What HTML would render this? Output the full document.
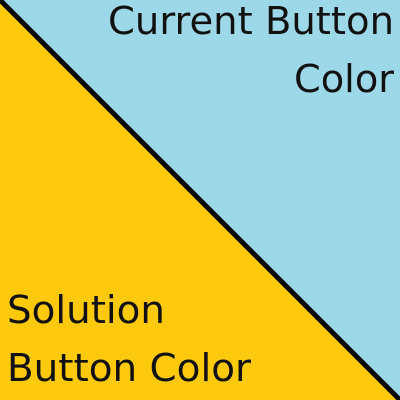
<!DOCTYPE html>
<html><head><style>html,body{margin:0;padding:0;width:400px;height:400px;overflow:hidden}</style></head>
<body>
<svg width="400" height="400" xmlns="http://www.w3.org/2000/svg">
<polygon points="0,0 400,0 400,400" fill="#9dd8e9"/>
<polygon points="0,0 0,400 400,400" fill="#fcc90d"/>
<line x1="0" y1="0" x2="400" y2="400" stroke="#000" stroke-width="5"/>
<g font-family="DejaVu Sans, Liberation Sans, sans-serif" font-size="38" fill="#111">
<text x="108" y="34" textLength="286" lengthAdjust="spacingAndGlyphs">Current Button</text>
<text x="294" y="92" textLength="100" lengthAdjust="spacingAndGlyphs">Color</text>
<text x="7" y="323" textLength="158" lengthAdjust="spacingAndGlyphs">Solution</text>
<text x="7" y="381" textLength="244" lengthAdjust="spacingAndGlyphs">Button Color</text>
</g>
</svg>
</body></html>
